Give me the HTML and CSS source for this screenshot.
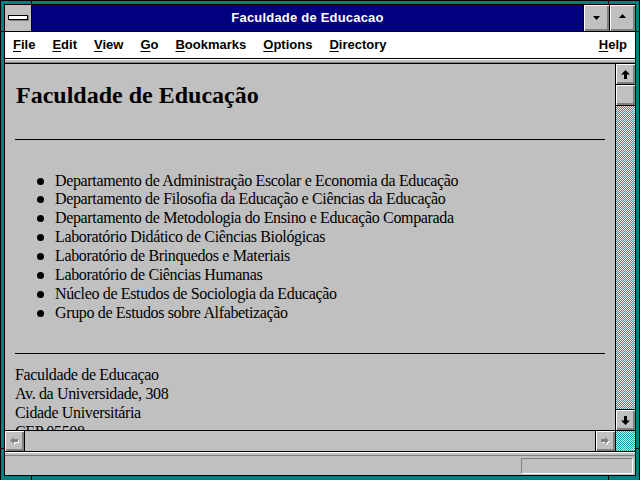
FILE: index.html
```html
<!DOCTYPE html>
<html lang="pt">
<head>
<meta charset="utf-8">
<title>Faculdade de Educacao</title>
<link rel="stylesheet" href="styles.css">
</head>
<body>
<div class="window">
  <span class="tick tick-t1"></span><span class="tick tick-t2"></span>
  <span class="tick tick-b1"></span><span class="tick tick-b2"></span>
  <span class="tick tick-l1"></span><span class="tick tick-l2"></span>
  <span class="tick tick-r1"></span><span class="tick tick-r2"></span>
  <div class="inner">
    <div class="titlebar">
      <div class="sysbox"><span class="sysbar"></span></div>
      <div class="title">Faculdade de Educacao</div>
      <div class="tbtn">
        <svg width="7" height="4" viewBox="0 0 7 4" class="tri-down"><polygon points="0,0 7,0 3.5,4" fill="#000"/></svg>
      </div>
      <div class="tbtn">
        <svg width="7" height="4" viewBox="0 0 7 4" class="tri-up"><polygon points="3.5,0 7,4 0,4" fill="#000"/></svg>
      </div>
    </div>
    <div class="menubar">
      <span class="mi"><u>F</u>ile</span>
      <span class="mi"><u>E</u>dit</span>
      <span class="mi"><u>V</u>iew</span>
      <span class="mi"><u>G</u>o</span>
      <span class="mi"><u>B</u>ookmarks</span>
      <span class="mi"><u>O</u>ptions</span>
      <span class="mi"><u>D</u>irectory</span>
      <span class="mi help"><u>H</u>elp</span>
    </div>
    <div class="strip"></div>
    <div class="main">
      <div class="page">
        <h1 class="heading">Faculdade de Educação</h1>
        <hr class="rule">
        <ul class="units">
          <li>Departamento de Administração Escolar e Economia da Educação</li>
          <li>Departamento de Filosofia da Educação e Ciências da Educação</li>
          <li>Departamento de Metodologia do Ensino e Educação Comparada</li>
          <li>Laboratório Didático de Ciências Biológicas</li>
          <li>Laboratório de Brinquedos e Materiais</li>
          <li>Laboratório de Ciências Humanas</li>
          <li>Núcleo de Estudos de Sociologia da Educação</li>
          <li>Grupo de Estudos sobre Alfabetização</li>
        </ul>
        <hr class="rule rule2">
        <div class="addr">
          <div>Faculdade de Educaçao</div>
          <div>Av. da Universidade, 308</div>
          <div>Cidade Universitária</div>
          <div>CEP 05508</div>
        </div>
      </div>
      <div class="vscroll">
        <div class="sbtn up">
          <svg width="9" height="9" viewBox="0 0 9 9"><polygon points="4.5,0 9,4.5 6,4.5 6,9 3,9 3,4.5 0,4.5" fill="#000"/></svg>
        </div>
        <div class="sbtn thumb"></div>
        <div class="track"></div>
        <div class="sbtn down">
          <svg width="9" height="9" viewBox="0 0 9 9"><polygon points="4.5,9 9,4.5 6,4.5 6,0 3,0 3,4.5 0,4.5" fill="#000"/></svg>
        </div>
      </div>
    </div>
    <div class="hrow">
      <div class="hbar">
        <div class="hbtn left">
          <svg width="9" height="8" viewBox="0 0 9 8"><polygon points="0,3.5 4,0 4,2 8,2 8,5 4,5 4,7" fill="#fff" transform="translate(1,1)"/><polygon points="0,3.5 4,0 4,2 8,2 8,5 4,5 4,7" fill="#808080"/></svg>
        </div>
        <div class="htrack"></div>
        <div class="hbtn right">
          <svg width="9" height="8" viewBox="0 0 9 8"><polygon points="8,3.5 4,0 4,2 0,2 0,5 4,5 4,7" fill="#fff" transform="translate(1,1)"/><polygon points="8,3.5 4,0 4,2 0,2 0,5 4,5 4,7" fill="#808080"/></svg>
        </div>
      </div>
      <div class="corner"></div>
    </div>
    <div class="sep"></div>
    <div class="status">
      <div class="statbox"></div>
    </div>
  </div>
</div>
</body>
</html>
```
FILE: styles.css
```css
html, body {
  margin: 0;
  padding: 0;
  width: 640px;
  height: 480px;
  overflow: hidden;
  background: #008080;
}

.window {
  position: relative;
  box-sizing: border-box;
  width: 640px;
  height: 481px;
  background: #008080;
  border: 1px solid #000;
  padding: 3px;
}

.tick {
  position: absolute;
  background: #000;
}
.tick-t1 { left: 30px; top: 0; width: 1px; height: 4px; }
.tick-t2 { left: 607px; top: 0; width: 1px; height: 4px; }
.tick-b1 { left: 30px; bottom: 0; width: 1px; height: 4px; }
.tick-b2 { left: 607px; bottom: 0; width: 1px; height: 4px; }
.tick-l1 { left: 0; top: 30px; width: 4px; height: 1px; }
.tick-l2 { left: 0; top: 447px; width: 4px; height: 1px; }
.tick-r1 { right: 0; top: 30px; width: 4px; height: 1px; }
.tick-r2 { right: 0; top: 447px; width: 4px; height: 1px; }

.inner {
  box-sizing: border-box;
  height: 472px;
  border: 1px solid #000;
  background: #c0c0c0;
  display: flex;
  flex-direction: column;
  overflow: hidden;
}

/* title bar */
.titlebar {
  height: 27px;
  box-sizing: border-box;
  border-bottom: 1px solid #000;
  display: flex;
  flex: none;
}
.sysbox {
  width: 26px;
  background: #c0c0c0;
  border-right: 1px solid #000;
  display: flex;
  align-items: center;
  justify-content: center;
}
.sysbar {
  display: block;
  width: 18px;
  height: 3px;
  background: #fff;
  border: 1px solid #000;
  box-shadow: 1px 1px 0 #808080;
  margin-top: -1px;
}
.title {
  flex: 1;
  background: #000080;
  color: #fff;
  font: bold 13px "Liberation Sans", Arial, sans-serif;
  letter-spacing: 0.2px;
  display: flex;
  align-items: center;
  justify-content: center;
  padding-bottom: 1px;
}
.tbtn {
  width: 25px;
  border-left: 1px solid #000;
  background: #c0c0c0;
  box-shadow: inset 1px 1px 0 #fff, inset -1px -1px 0 #808080, inset -2px -2px 0 #808080;
  display: flex;
  justify-content: center;
}
.tri-down { margin-top: 11px; margin-right: 1px; }
.tri-up { margin-top: 9px; margin-right: 1px; }

/* menu bar */
.menubar {
  height: 26px;
  flex: none;
  background: #fff;
  display: flex;
  align-items: center;
  font: bold 13px/26px "Liberation Sans", Arial, sans-serif;
  color: #000;
}
.mi {
  padding: 0 8.5px;
}
.mi:first-child {
  padding-left: 8px;
}
.mi u {
  text-decoration-thickness: 1px;
  text-underline-offset: 2px;
}
.help {
  margin-left: auto;
  padding-right: 8px;
}

.strip {
  box-sizing: border-box;
  height: 6px;
  flex: none;
  background: #c0c0c0;
  border-top: 1px solid #000;
  border-bottom: 1px solid #000;
  box-shadow: inset 0 1px 0 #fff, inset 0 -1px 0 #808080;
}

/* main area */
.main {
  flex: 1;
  display: flex;
  min-height: 0;
}
.page {
  flex: 1;
  overflow: hidden;
  padding: 17px 10px 0 10px;
  font: 16px/18.9px "Liberation Serif", "Times New Roman", serif;
  letter-spacing: -0.35px;
  color: #000;
}
.heading {
  margin: 0 0 0 1px;
  font: bold 24px/28px "Liberation Serif", "Times New Roman", serif;
  letter-spacing: 0;
}
.rule {
  margin: 30px 0 0 0;
  height: 0;
  border: 0;
  border-top: 1px solid #000;
}
.units {
  list-style: none;
  margin: 31.5px 0 0 0;
  padding: 0 0 0 40px;
}
.units li {
  position: relative;
  white-space: nowrap;
}
.units li::before {
  content: "";
  position: absolute;
  left: -18px;
  top: 6px;
  width: 7px;
  height: 7px;
  border-radius: 50%;
  background: #000;
}
.rule2 {
  margin-top: 30.5px;
}
.addr {
  margin-top: 12px;
}

/* scrollbars */
.vscroll {
  box-sizing: border-box;
  width: 20px;
  border-left: 1px solid #000;
  display: flex;
  flex-direction: column;
}
.sbtn {
  box-sizing: border-box;
  height: 21px;
  flex: none;
  background: #c0c0c0;
  box-shadow: inset 1px 1px 0 #fff, inset -1px -1px 0 #808080, inset -2px -2px 0 #808080;
  display: flex;
  align-items: center;
  justify-content: center;
}
.up, .thumb {
  border-bottom: 1px solid #000;
}
.down {
  border-top: 1px solid #000;
}
.track, .corner {
  background-color: #e0eeee;
  background-image: repeating-conic-gradient(#1a9c9c 0 25%, #e6eeee 0 50%);
  background-size: 2px 2px;
}
.track {
  flex: 1;
}

.hrow {
  box-sizing: border-box;
  height: 21px;
  flex: none;
  border-top: 1px solid #000;
  display: flex;
}
.hbar {
  flex: 1;
  display: flex;
}
.hbtn {
  box-sizing: border-box;
  width: 20px;
  background: #c0c0c0;
  box-shadow: inset 1px 1px 0 #fff, inset -1px -1px 0 #808080, inset -2px -2px 0 #808080;
  display: flex;
  align-items: center;
  justify-content: center;
}
.hbtn.left {
  border-right: 1px solid #000;
}
.hbtn.right {
  border-left: 1px solid #000;
}
.htrack {
  flex: 1;
  background: #c0c0c0;
}
.corner {
  box-sizing: border-box;
  width: 20px;
  border-left: 1px solid #000;
}

.sep {
  box-sizing: border-box;
  height: 5px;
  flex: none;
  border-top: 1px solid #000;
  background: #c0c0c0;
  box-shadow: inset 0 1px 0 #fff, inset 0 -1px 0 #808080;
}
.status {
  height: 19px;
  flex: none;
  box-sizing: border-box;
  display: flex;
  justify-content: flex-end;
  padding-top: 2px;
  background: #c0c0c0;
}
.statbox {
  box-sizing: border-box;
  width: 112px;
  height: 16px;
  margin-right: 2px;
  border-top: 1px solid #808080;
  border-left: 1px solid #808080;
  border-right: 1px solid #fff;
  border-bottom: 1px solid #fff;
}
```
